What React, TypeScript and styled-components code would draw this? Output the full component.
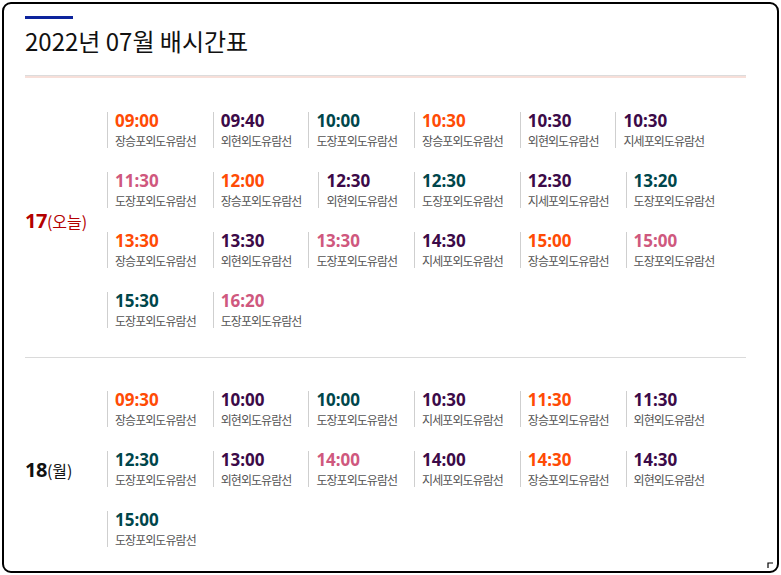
import React from "react";
import styled, { createGlobalStyle } from "styled-components";

const Global = createGlobalStyle`
  html, body { margin: 0; padding: 0; background: #ffffff; }
  body { font-family: "Noto Sans CJK KR", "Noto Sans", sans-serif; color: #111; }
`;

type Tone = "orange" | "purple" | "teal" | "pink";
const toneColor: Record<Tone, string> = {
  orange: "#ff4b05",
  purple: "#3c0a48",
  teal: "#00464b",
  pink: "#cf587e",
};

const Frame = styled.div`
  position: relative;
  box-sizing: border-box;
  margin: 2px 0 0 2px;
  width: 777px;
  height: 571px;
  border: 2px solid #000;
  border-radius: 9px;
  padding: 12px 31px 0 21px;
  overflow: hidden;
`;

const Header = styled.header`
  display: flex;
  flex-direction: column;
  border-bottom: 1px solid #dcdcdc;
  box-shadow: 0 2px 0 #f7dfd9;
  padding-bottom: 19px;
`;

const Accent = styled.span`
  display: block;
  width: 48px;
  height: 3px;
  background: #0c239c;
`;

const Title = styled.h1`
  margin: 7px 0 0;
  font-size: 24px;
  font-weight: 400;
  line-height: 30px;
  color: #111;
  letter-spacing: 0;
`;

const Section = styled.section<{ $pt: number; $pb: number; $last?: boolean }>`
  display: flex;
  align-items: center;
  padding: ${(p) => p.$pt}px 0 ${(p) => p.$pb}px;
  border-bottom: ${(p) => (p.$last ? "none" : "1px solid #dadada")};
`;

const DateLabel = styled.div<{ $today?: boolean }>`
  flex: 0 0 82px;
  color: ${(p) => (p.$today ? "#b30000" : "#111")};
  display: flex;
  align-items: baseline;
`;

const DayNum = styled.span`
  font-family: "Noto Sans", "Noto Sans CJK KR", sans-serif;
  font-size: 20px;
  font-weight: 700;
  letter-spacing: -0.5px;
`;

const DayName = styled.span`
  font-size: 16px;
  font-weight: 400;
`;

const Grid = styled.div`
  flex: 1;
  display: flex;
  flex-wrap: wrap;
  row-gap: 24px;
`;

const Item = styled.div`
  box-sizing: border-box;
  height: 36px;
  border-left: 1px solid #cfcfcf;
  padding-left: 7px;
  margin-right: 17px;
  display: flex;
  flex-direction: column;
  justify-content: space-between;
`;

const Time = styled.span<{ $tone: Tone }>`
  font-family: "Noto Sans", "Noto Sans CJK KR", sans-serif;
  font-size: 17px;
  font-weight: 700;
  line-height: 17px;
  color: ${(p) => toneColor[p.$tone]};
`;

const Route = styled.span`
  font-size: 12px;
  line-height: 14px;
  letter-spacing: -0.95px;
  color: #555;
  white-space: nowrap;
`;

const CornerMark = styled.svg`
  position: absolute;
  right: 1px;
  bottom: 1px;
`;

type Trip = [string, string, Tone];

const day17: Trip[] = [
  ["09:00", "장승포외도유람선", "orange"],
  ["09:40", "외현외도유람선", "purple"],
  ["10:00", "도장포외도유람선", "teal"],
  ["10:30", "장승포외도유람선", "orange"],
  ["10:30", "외현외도유람선", "purple"],
  ["10:30", "지세포외도유람선", "purple"],
  ["11:30", "도장포외도유람선", "pink"],
  ["12:00", "장승포외도유람선", "orange"],
  ["12:30", "외현외도유람선", "purple"],
  ["12:30", "도장포외도유람선", "teal"],
  ["12:30", "지세포외도유람선", "purple"],
  ["13:20", "도장포외도유람선", "teal"],
  ["13:30", "장승포외도유람선", "orange"],
  ["13:30", "외현외도유람선", "purple"],
  ["13:30", "도장포외도유람선", "pink"],
  ["14:30", "지세포외도유람선", "purple"],
  ["15:00", "장승포외도유람선", "orange"],
  ["15:00", "도장포외도유람선", "pink"],
  ["15:30", "도장포외도유람선", "teal"],
  ["16:20", "도장포외도유람선", "pink"],
];

const day18: Trip[] = [
  ["09:30", "장승포외도유람선", "orange"],
  ["10:00", "외현외도유람선", "purple"],
  ["10:00", "도장포외도유람선", "teal"],
  ["10:30", "지세포외도유람선", "purple"],
  ["11:30", "장승포외도유람선", "orange"],
  ["11:30", "외현외도유람선", "purple"],
  ["12:30", "도장포외도유람선", "teal"],
  ["13:00", "외현외도유람선", "purple"],
  ["14:00", "도장포외도유람선", "pink"],
  ["14:00", "지세포외도유람선", "purple"],
  ["14:30", "장승포외도유람선", "orange"],
  ["14:30", "외현외도유람선", "purple"],
  ["15:00", "도장포외도유람선", "teal"],
];

const Trips = ({ list }: { list: Trip[] }) => (
  <Grid>
    {list.map(([t, r, tone], i) => (
      <Item key={i}>
        <Time $tone={tone}>{t}</Time>
        <Route>{r}</Route>
      </Item>
    ))}
  </Grid>
);

export default function App() {
  return (
    <>
      <Global />
      <Frame>
        <Header>
          <Accent />
          <Title>2022년 07월 배시간표</Title>
        </Header>
        <Section $pt={36} $pb={29}>
          <DateLabel $today>
            <DayNum>17</DayNum>
            <DayName>(오늘)</DayName>
          </DateLabel>
          <Trips list={day17} />
        </Section>
        <Section $pt={33} $pb={20} $last>
          <DateLabel>
            <DayNum>18</DayNum>
            <DayName>(월)</DayName>
          </DateLabel>
          <Trips list={day18} />
        </Section>
        <CornerMark width="10" height="10" viewBox="0 0 10 10">
          <path d="M2 8 V3 H7" fill="none" stroke="#000" strokeWidth="1.2" />
        </CornerMark>
      </Frame>
    </>
  );
}
